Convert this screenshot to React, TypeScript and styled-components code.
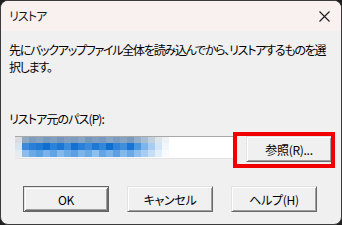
import styled, { createGlobalStyle } from 'styled-components';

const GlobalStyle = createGlobalStyle`
  html, body {
    margin: 0;
    padding: 0;
    background: #1e1e1e;
    width: 342px;
    height: 225px;
    overflow: hidden;
  }
  * {
    box-sizing: border-box;
  }
`;

// モザイク部分の色（ぼかした選択テキスト）
const mosaicRows: string[][] = [
  ['#d9dde2', '#8fa8c2', '#7e9cbc', '#86a3c1', '#7799bd', '#809fc0', '#7496bd', '#839fbf', '#7b9bbf', '#86a4c3', '#7697bc', '#809ec0', '#7899be', '#88a5c3', '#7d9cbf', '#86a3c2', '#7a9abe', '#93aec8', '#a9bed3', '#c4d2e0', '#dde5ec', '#eef1f5'],
  ['#dde3ea', '#3f8ad8', '#2a80d8', '#1f7ad6', '#0f6fd1', '#2b82d9', '#1b76d4', '#3a8cdc', '#1670d2', '#2a80d8', '#3b8bdb', '#1e78d5', '#3387da', '#0e6ed0', '#2c83d9', '#3f8fdd', '#1a74d3', '#4a96df', '#7db4ea', '#a9cdf2', '#d2e5f8', '#f2f7fd'],
  ['#e6ebf0', '#8cbced', '#6aaae6', '#5aa1e4', '#78b2e8', '#5fa4e4', '#86b9eb', '#6babe6', '#5d9fe2', '#7cb3e9', '#69a9e6', '#8fbfee', '#64a6e5', '#7ab3e9', '#5c9fe2', '#83b8eb', '#6aa9e6', '#8ebeee', '#a9cdf2', '#c7def7', '#e3eefb', '#f8fbfe'],
  ['#eeeeee', '#f3f5f8', '#f5f7fa', '#f4f6f9', '#f6f8fa', '#f4f6f9', '#f6f8fa', '#f5f7f9', '#f4f6f9', '#f6f8fa', '#f5f7f9', '#f6f8fa', '#f4f6f9', '#f6f8fa', '#f5f7f9', '#f6f8fa', '#f5f7f9', '#f8f9fb', '#fbfcfd', '#ffffff', '#ffffff', '#ffffff'],
];

function CloseIcon() {
  return (
    <svg width="11" height="11" viewBox="0 0 11 11">
      <path d="M0.5 0.5 L10.5 10.5 M10.5 0.5 L0.5 10.5" stroke="#1a1a1a" strokeWidth="1.1" fill="none" />
    </svg>
  );
}

function App() {
  return (
    <>
      <GlobalStyle />
      <Window>
        <TitleBar>
          <Title>リストア</Title>
          <CloseButton>
            <CloseIcon />
          </CloseButton>
        </TitleBar>
        <Body>
          <Message>
            先にバックアップファイル全体を読み込んでから、リストアするものを選
            <br />
            択します。
          </Message>
          <FieldLabel>リストア元のパス(P):</FieldLabel>
          <PathRow>
            <PathField>
              <Mosaic>
                {mosaicRows.map((row, r) =>
                  row.map((c, i) => <MosaicCell key={`${r}-${i}`} $c={c} />)
                )}
              </Mosaic>
            </PathField>
            <Highlighted>
              <DialogButton>参照(R)...</DialogButton>
            </Highlighted>
          </PathRow>
          <ButtonRow>
            <DialogButton $default>OK</DialogButton>
            <DialogButton>キャンセル</DialogButton>
            <DialogButton>ヘルプ(H)</DialogButton>
          </ButtonRow>
        </Body>
      </Window>
    </>
  );
}

const Window = styled.div`
  width: 342px;
  height: 225px;
  display: flex;
  flex-direction: column;
  background: #f0f0f0;
  border: 1px solid #3b3b3b;
  border-radius: 8px;
  overflow: hidden;
  font-family: 'Noto Sans CJK JP', 'Noto Sans', sans-serif;
  font-feature-settings: 'palt';
  font-size: 12px;
  color: #000;
`;

const TitleBar = styled.div`
  height: 30px;
  flex-shrink: 0;
  display: flex;
  align-items: center;
  justify-content: space-between;
  padding: 0 0 0 8px;
  background: #f9f1f0;
`;

const Title = styled.div`
  font-size: 12px;
  color: #1b1b1b;
  margin-top: -1px;
  letter-spacing: -0.9px;
`;

const CloseButton = styled.div`
  width: 46px;
  height: 30px;
  display: flex;
  align-items: center;
  justify-content: center;
  margin-right: -6px;
`;

const Body = styled.div`
  display: flex;
  flex-direction: column;
  padding: 0 0 0 8px;
`;

const Message = styled.div`
  margin-top: 10px;
  line-height: 17px;
  white-space: nowrap;
  letter-spacing: -1.25px;
`;

const FieldLabel = styled.div`
  margin-top: 35px;
  line-height: 17px;
  letter-spacing: -0.9px;
`;

const PathRow = styled.div`
  display: flex;
  align-items: flex-start;
  margin-top: 9px;
  padding-left: 6px;
`;

const PathField = styled.div`
  width: 218px;
  height: 23px;
  background: #ffffff;
  border-top: 1px solid #a8a8a8;
  border-bottom: 1px solid #e3e3e3;
  overflow: hidden;
`;

const Mosaic = styled.div`
  display: grid;
  grid-template-columns: repeat(22, 7px);
  grid-template-rows: 6px 7px 7px 3px;
`;

const MosaicCell = styled.span<{ $c: string }>`
  background: ${(p) => p.$c};
`;

const Highlighted = styled.div`
  position: relative;
  margin-left: 13px;

  &::after {
    content: '';
    position: absolute;
    top: -4px;
    left: -13px;
    right: -3px;
    bottom: -6px;
    border: 4px solid #f00000;
    pointer-events: none;
  }
`;

const DialogButton = styled.div<{ $default?: boolean }>`
  width: 86px;
  height: 26px;
  display: flex;
  align-items: center;
  justify-content: center;
  background: #f0f0f0;
  font-size: 12px;
  color: #000;
  letter-spacing: -0.3px;
  border: 1px solid;
  border-color: ${(p) =>
    p.$default ? '#646464' : '#e3e3e3 #696969 #696969 #e3e3e3'};
  box-shadow: ${(p) =>
    p.$default
      ? 'inset 1px 1px #e3e3e3, inset -1px -1px #696969, inset 2px 2px #ffffff, inset -2px -2px #a0a0a0'
      : 'inset 1px 1px #ffffff, inset -1px -1px #a0a0a0'};
`;

const ButtonRow = styled.div`
  display: flex;
  gap: 18px;
  margin-top: 24px;
  padding-left: 14px;
`;

export default App;
